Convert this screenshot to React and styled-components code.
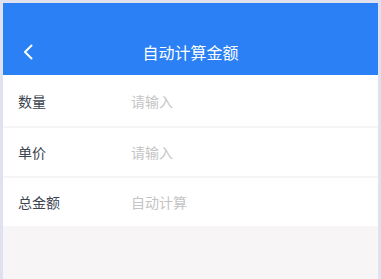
import React from 'react'
import styled, { createGlobalStyle } from 'styled-components'

const GlobalStyle = createGlobalStyle`
  html, body {
    margin: 0;
    padding: 0;
    background: #dfe1ee;
  }
  body {
    font-family: "Noto Sans CJK SC", "Noto Sans", sans-serif;
  }
`

const Frame = styled.div`
  box-sizing: border-box;
  width: 381px;
  height: 279px;
  padding: 3px 3px 0 3px;
  background: #dfe1ee;
`

const Screen = styled.div`
  height: 100%;
  display: flex;
  flex-direction: column;
  background: #f7f5f6;
`

const Header = styled.div`
  height: 72px;
  display: flex;
  align-items: flex-end;
  background: #2a80f4;
  color: #fff;
`

const NavBar = styled.div`
  position: relative;
  flex: 1;
  height: 46px;
  display: flex;
  align-items: center;
  justify-content: center;
`

const BackButton = styled.button`
  position: absolute;
  left: 19px;
  top: 50%;
  transform: translateY(-50%);
  width: 20px;
  height: 20px;
  padding: 0;
  border: none;
  background: none;
  display: flex;
  align-items: center;
  justify-content: flex-start;
`

const Title = styled.div`
  font-size: 16px;
  line-height: 1;
`

const Form = styled.div`
  display: flex;
  flex-direction: column;
  background: #fff;
`

const Row = styled.div`
  height: ${p => (p.$first ? '51px' : '48px')};
  display: flex;
  align-items: center;
  padding-left: 15px;
  border-top: ${p => (p.$first ? '0' : '2px solid #f5f5f6')};
`

const Label = styled.div`
  width: 113px;
  font-size: 14px;
  color: #3c4350;
`

const Field = styled.input`
  flex: 1;
  border: none;
  outline: none;
  padding: 0;
  font-family: inherit;
  font-size: 14px;
  color: #333;
  background: transparent;

  &::placeholder {
    color: #c4c4c4;
  }
`

const rows = [
  { label: '数量', placeholder: '请输入' },
  { label: '单价', placeholder: '请输入' },
  { label: '总金额', placeholder: '自动计算', readOnly: true },
]

const App = () => (
  <Frame>
    <GlobalStyle />
    <Screen>
      <Header>
        <NavBar>
          <BackButton aria-label="返回">
            <svg width="12" height="16" viewBox="0 0 12 16">
              <path d="M9.5 1.5 L3 8 L9.5 14.5" fill="none" stroke="#fff" strokeWidth="2" strokeLinecap="round" strokeLinejoin="round" />
            </svg>
          </BackButton>
          <Title>自动计算金额</Title>
        </NavBar>
      </Header>
      <Form>
        {rows.map((r, i) => (
          <Row key={r.label} $first={i === 0}>
            <Label>{r.label}</Label>
            <Field placeholder={r.placeholder} readOnly={r.readOnly} />
          </Row>
        ))}
      </Form>
    </Screen>
  </Frame>
)

export default App
